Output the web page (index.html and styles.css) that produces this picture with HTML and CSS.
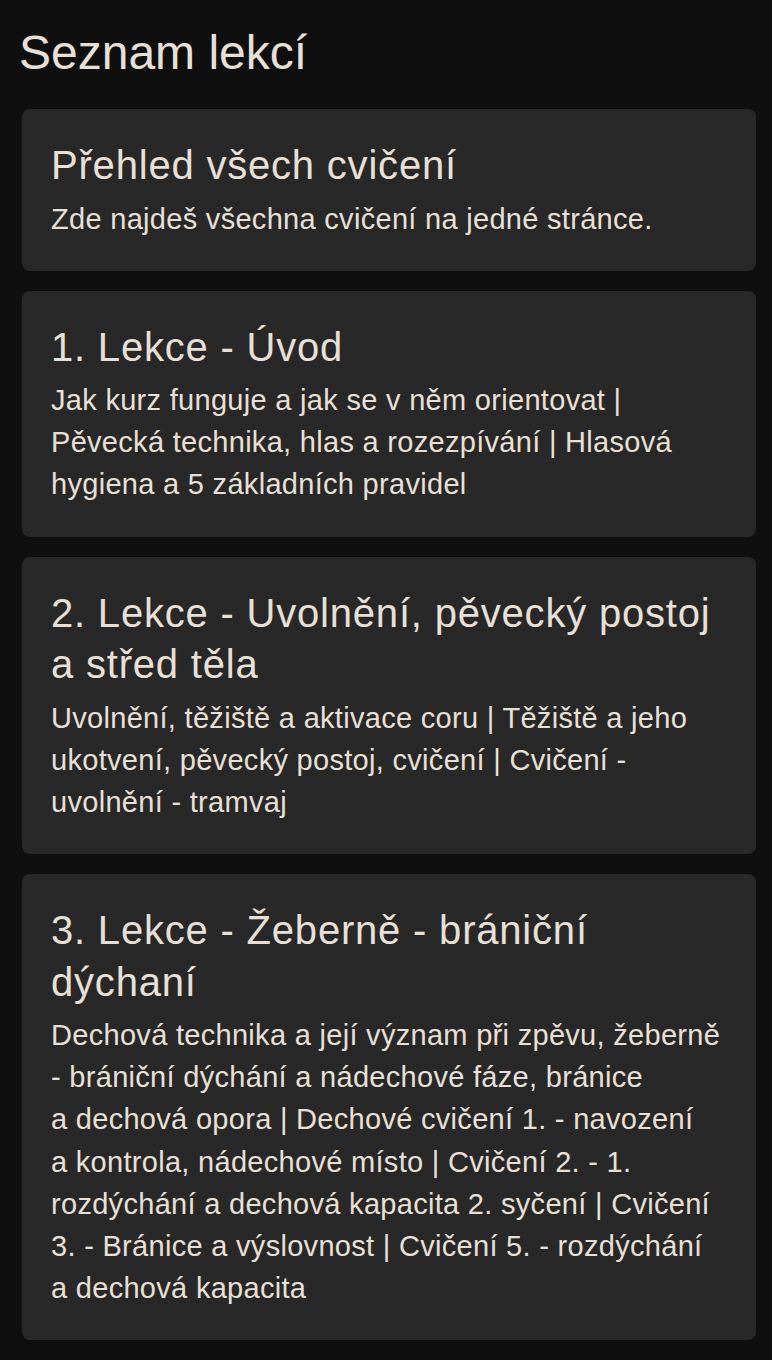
FILE: index.html
```html
<!DOCTYPE html>
<html lang="cs">
<head>
<meta charset="utf-8">
<title>Seznam lekcí</title>
<link rel="stylesheet" href="styles.css">
</head>
<body>
<main class="page">
  <h1 class="page-title">Seznam lekcí</h1>
  <ul class="lessons">
    <li class="card">
      <h2 class="card-title">Přehled všech cvičení</h2>
      <p class="card-desc">Zde najdeš všechna cvičení na jedné stránce.</p>
    </li>
    <li class="card">
      <h2 class="card-title">1. Lekce - Úvod</h2>
      <p class="card-desc">Jak kurz funguje a jak se v něm orientovat | Pěvecká technika, hlas a rozezpívání | Hlasová hygiena a 5 základních pravidel</p>
    </li>
    <li class="card">
      <h2 class="card-title">2. Lekce - Uvolnění, pěvecký postoj a&nbsp;střed těla</h2>
      <p class="card-desc">Uvolnění, těžiště a aktivace coru | Těžiště a jeho ukotvení, pěvecký postoj, cvičení | Cvičení - uvolnění - tramvaj</p>
    </li>
    <li class="card">
      <h2 class="card-title">3. Lekce - Žeberně - brániční dýchaní</h2>
      <p class="card-desc">Dechová technika a její význam při zpěvu, žeberně - brániční dýchání a nádechové fáze, bránice a&nbsp;dechová opora | Dechové cvičení 1. - navození a&nbsp;kontrola, nádechové místo | Cvičení 2. - 1. rozdýchání a dechová kapacita 2. syčení | Cvičení 3. - Bránice a výslovnost | Cvičení 5. - rozdýchání a&nbsp;dechová kapacita</p>
    </li>
    <li class="card">
      <h2 class="card-title">4. Lekce - Rezonance a&nbsp;barva hlasu</h2>
      <p class="card-desc">Rezonanční prostory, otevřený hrtan a měkké nasazení tónu</p>
    </li>
  </ul>
</main>
</body>
</html>
```

FILE: styles.css
```css
html, body {
  margin: 0;
  padding: 0;
  background: #0f0f0f;
}

body {
  font-family: "Liberation Sans", Arial, Helvetica, sans-serif;
  color: #e8e0d7;
}

.page {
  padding: 25px 16px 0 22px;
}

.page-title {
  margin: 0 0 29px -3px;
  font-size: 48px;
  font-weight: 400;
  line-height: normal;
}

.lessons {
  list-style: none;
  margin: 0;
  padding: 0;
  display: flex;
  flex-direction: column;
  gap: 20px;
}

.card {
  background: #282828;
  border-radius: 8px;
  padding: 31px 29px;
}

.card-title {
  margin: 0 0 6px;
  font-size: 40px;
  font-weight: 400;
  line-height: 51.5px;
  letter-spacing: 0.8px;
}

.card-desc {
  margin: 0;
  font-size: 29px;
  line-height: 42.15px;
  letter-spacing: 0.3px;
}
```
